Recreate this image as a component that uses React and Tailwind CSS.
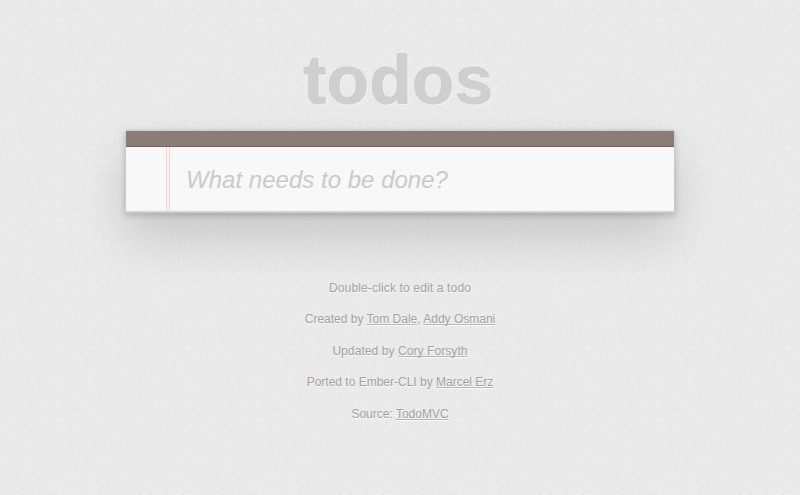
import React from 'react';

const TILE = 100;

// Deterministic woven grain: a fine checkerboard broken up by noise.
function grain() {
  const dark = [];
  const mid = [];
  let s = 7919;
  const random = () => {
    s = (s + 0x6d2b79f5) | 0;
    let t = Math.imul(s ^ (s >>> 15), 1 | s);
    t = (t + Math.imul(t ^ (t >>> 7), 61 | t)) ^ t;
    return ((t ^ (t >>> 14)) >>> 0) / 4294967296;
  };
  for (let y = 0; y < TILE; y++) {
    for (let x = 0; x < TILE; x++) {
      const r = random();
      const even = (x + y) % 2 === 0;
      const knot = even && (x % 4 === y % 4 || (x + y) % 4 === 0);
      if (knot && r < 0.62) dark.push(`M${x} ${y}h1v1h-1z`);
      else if ((even && r < 0.9) || r < 0.14) mid.push(`M${x} ${y}h1v1h-1z`);
    }
  }
  return { dark: dark.join(''), mid: mid.join('') };
}

const weave = grain();

function Texture() {
  return (
    <svg className="absolute inset-0 -z-10 h-full w-full" aria-hidden="true" shapeRendering="crispEdges">
      <defs>
        <pattern id="weave" width={TILE} height={TILE} patternUnits="userSpaceOnUse">
          <rect width={TILE} height={TILE} fill="#ededed" />
          <path d={weave.mid} fill="#e9e9e9" />
          <path d={weave.dark} fill="#e4e4e4" />
        </pattern>
      </defs>
      <rect width="100%" height="100%" fill="url(#weave)" />
    </svg>
  );
}

function Credit({ children }) {
  return <p className="h-[31.5px] leading-[18px]">{children}</p>;
}

function Name({ children }) {
  return (
    <a href="#" className="underline decoration-[#b8b8b8] decoration-1 underline-offset-1 [text-decoration-skip-ink:none]">
      {children}
    </a>
  );
}

export default function App() {
  return (
    <div className="relative isolate flex h-[495px] w-full flex-col items-center overflow-hidden bg-[#eaeaea] font-['Liberation_Sans',Arial,sans-serif]">
      <Texture />
      <h1 className="flex h-[130px] items-start pt-[41px] pr-[2px] text-[69px] leading-[80px] font-bold tracking-[0.5px] text-[#cfcfcf] [text-shadow:-1px_-1px_0_rgba(0,0,0,0.13),1px_1px_0_rgba(255,255,255,0.4)]">
        todos
      </h1>
      <section className="w-[550px] rounded-t-[2px] border border-[#ccc] bg-[#f8f8f8] bg-clip-padding shadow-[0_2px_6px_0_rgba(0,0,0,0.2),0_25px_50px_0_rgba(0,0,0,0.15)]">
        <div className="h-4 rounded-t-[1px] border-b border-[#6c615c] bg-[#8b7d76]" />
        <div className="flex h-[65px] shadow-[inset_0_-1px_1px_0_rgba(0,0,0,0.16)]">
          <div className="ml-10 w-1 border-x border-[#f2cfcf]" />
          <input
            className="ml-4 flex-1 bg-transparent text-2xl tracking-[0.02px] italic outline-none placeholder:text-[#cacaca] placeholder:opacity-100"
            placeholder="What needs to be done?"
          />
        </div>
      </section>
      <footer className="mt-[65.5px] text-center text-[12px] text-[#a2a2a2] [text-shadow:0_1px_0_rgba(255,255,255,0.7)]">
        <Credit><span className="tracking-[0.15px]">Double-click to edit a todo</span></Credit>
        <Credit>Created by <Name>Tom Dale</Name>, <Name>Addy Osmani</Name></Credit>
        <Credit><span className="tracking-[0.08px]">Updated by <Name>Cory Forsyth</Name></span></Credit>
        <Credit>Ported to Ember-CLI by <Name>Marcel Erz</Name></Credit>
        <Credit>Source: <Name>TodoMVC</Name></Credit>
      </footer>
    </div>
  );
}
